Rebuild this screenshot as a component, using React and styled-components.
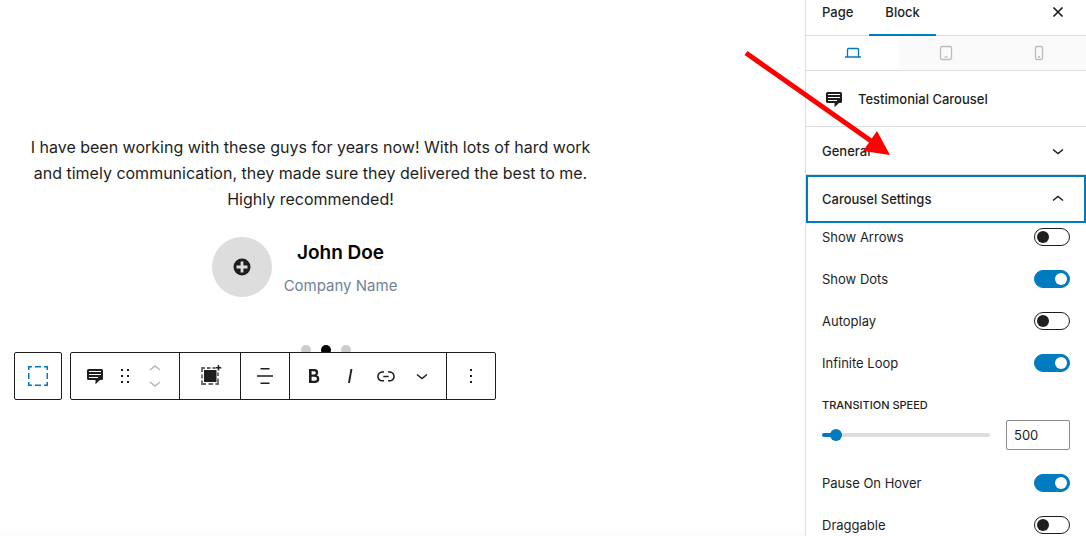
import React, { useState } from 'react';
import styled, { createGlobalStyle, css } from 'styled-components';

const ink = '#1e1e1e';
const blue = '#007bc0';
const line = '#dddddd';

const GlobalStyle = createGlobalStyle`
  *, *::before, *::after { box-sizing: border-box; }
  body {
    margin: 0;
    background: #fff;
    color: ${ink};
    font-family: Inter, "Liberation Sans", sans-serif;
    font-size: 13px;
  }
  button, input { font: inherit; color: inherit; }
  h2, h3, p, blockquote { margin: 0; }
`;

const Editor = styled.div`
  display: flex;
  align-items: stretch;
  height: 100vh;
  overflow: hidden;
`;

const Canvas = styled.main`
  flex: 1;
  min-width: 0;
  padding-top: 134px;
  background: linear-gradient(to top, #fbfbfb, #ffffff 8px);
`;

const Testimonial = styled.section`
  display: flex;
  flex-direction: column;
  align-items: center;
  max-width: 621px;
  padding: 0 24px;
`;

const Quote = styled.blockquote`
  font-size: 16px;
  line-height: 26px;
  text-align: center;
`;

const Author = styled.div`
  display: flex;
  margin-top: 25px;
`;

const Avatar = styled.button`
  display: grid;
  place-items: center;
  width: 60px;
  height: 60px;
  padding: 0;
  border: 0;
  border-radius: 50%;
  background: ${line};
`;

const AuthorText = styled.div`
  margin: 0 12px;
  text-align: center;
`;

const Name = styled.h3`
  color: #000;
  font-size: 19px;
  font-weight: 600;
  line-height: 32px;
`;

const Company = styled.p`
  margin-top: 4px;
  color: #71829a;
  font-size: 15px;
  line-height: 26px;
`;

const Dots = styled.div`
  display: flex;
  gap: 10px;
  margin-top: 46px;
  padding-left: 30px;
`;

const Dot = styled.button`
  width: 10px;
  height: 10px;
  padding: 0;
  border: 0;
  border-radius: 50%;
  background: ${(p) => (p.$active ? '#000' : '#ccc')};
`;

const ToolbarRow = styled.div`
  position: relative;
  display: flex;
  gap: 8px;
  margin: -3px 0 0 14px;
`;

const Toolbar = styled.div`
  display: flex;
  height: 48px;
  border: 1px solid ${ink};
  border-radius: 2px;
  background: #fff;
`;

const ToolGroup = styled.div`
  display: flex;
  align-items: center;
  padding: 0 ${(p) => p.$pad || 0}px;
  & + & { border-left: 1px solid ${ink}; }
`;

const Tool = styled.button`
  display: grid;
  place-items: center;
  width: ${(p) => p.$w || 36}px;
  height: 46px;
  padding: 0;
  border: 0;
  background: none;
`;

const Movers = styled.div`
  display: flex;
  flex-direction: column;
  color: #b5b5b5;
`;

const Mover = styled.button`
  display: grid;
  place-items: center;
  width: 36px;
  height: 16px;
  padding: 0;
  border: 0;
  background: none;
`;

const Sidebar = styled.aside`
  position: relative;
  flex: 0 0 281px;
  border-left: 1px solid ${line};
  background: #fff;
`;

const Tabs = styled.div`
  display: flex;
  align-items: flex-end;
  height: 36px;
  border-bottom: 1px solid ${line};
`;

const Tab = styled.button`
  height: 36px;
  margin-bottom: -1px;
  padding: 0 16px 10px;
  border: 0;
  border-bottom: 2px solid ${(p) => (p.$active ? blue : 'transparent')};
  background: none;
  font-weight: 500;
`;

const Close = styled.button`
  display: grid;
  place-items: center;
  width: 24px;
  height: 24px;
  margin: 0 16px 11px auto;
  padding: 0;
  border: 0;
  background: none;
`;

const Devices = styled.div`
  display: grid;
  grid-template-columns: repeat(3, 1fr);
  height: 35px;
  border-bottom: 1px solid ${line};
`;

const Device = styled.button`
  display: grid;
  place-items: center;
  padding: 0;
  border: 0;
  background: ${(p) => (p.$active ? '#fff' : '#fafafa')};
  color: ${(p) => (p.$active ? blue : '#bdbdbd')};
`;

const BlockCard = styled.div`
  display: flex;
  align-items: center;
  gap: 12px;
  height: 56px;
  padding: 0 16px;
  border-bottom: 1px solid ${line};
`;

const BlockTitle = styled.h2`
  font-size: 13px;
  font-weight: 500;
`;

const PanelToggle = styled.button`
  display: flex;
  align-items: center;
  justify-content: space-between;
  width: 100%;
  height: 48px;
  padding: 0 16px;
  border: 0;
  border-bottom: 1px solid ${line};
  background: none;
  font-weight: 500;
  ${(p) => p.$open && css`
    border-bottom: 0;
    box-shadow: inset 0 0 0 2px ${blue};
  `}
`;

const Settings = styled.div`
  display: flex;
  flex-direction: column;
  gap: 24px;
  padding: 5px 16px 0;
`;

const ToggleRow = styled.label`
  display: flex;
  align-items: center;
  justify-content: space-between;
  height: 18px;
`;

const Switch = styled.input`
  appearance: none;
  width: 36px;
  height: 18px;
  margin: 0;
  padding: 2px;
  border: 1px solid ${ink};
  border-radius: 9px;
  background: #fff;
  &::before {
    content: '';
    display: block;
    width: 12px;
    height: 12px;
    border-radius: 50%;
    background: ${ink};
  }
  &:checked {
    border-color: ${blue};
    background: ${blue};
  }
  &:checked::before {
    margin-left: auto;
    background: #fff;
  }
`;

const SpeedField = styled.div`
  display: flex;
  flex-direction: column;
  gap: 6px;
`;

const SpeedLabel = styled.label`
  font-size: 11px;
  font-weight: 500;
  line-height: 18px;
  text-transform: uppercase;
`;

const SpeedControls = styled.div`
  display: flex;
  align-items: center;
  gap: 16px;
`;

const Range = styled.input`
  appearance: none;
  flex: 1;
  min-width: 0;
  height: 12px;
  margin: 0;
  background: none;
  &::-webkit-slider-runnable-track {
    height: 4px;
    border-radius: 2px;
    background: linear-gradient(to right, ${blue} ${(p) => p.$fill}%, ${line} ${(p) => p.$fill}%);
  }
  &::-webkit-slider-thumb {
    appearance: none;
    width: 12px;
    height: 12px;
    margin-top: -4px;
    border-radius: 50%;
    background: ${blue};
  }
`;

const NumberBox = styled.input`
  width: 64px;
  height: 30px;
  padding: 0 7px;
  border: 1px solid #8c8c8c;
  border-radius: 2px;
  background: #fff;
`;

const Arrow = styled.svg`
  position: absolute;
  top: 48px;
  left: -64px;
  pointer-events: none;
`;

const Icon = ({ size = 24, children, ...rest }) => (
  <svg width={size} height={size} viewBox={`0 0 ${size} ${size}`} fill="none" stroke="currentColor" strokeWidth="1.5" aria-hidden="true" {...rest}>
    {children}
  </svg>
);

const BubbleIcon = () => (
  <Icon>
    <path fill="currentColor" stroke="none" d="M5.500 5h13a1.500 1.500 0 0 1 1.500 1.500v8a1.500 1.500 0 0 1-1.500 1.500H17l-4.500 4.300V16h-7A1.500 1.500 0 0 1 4 14.500v-8A1.500 1.500 0 0 1 5.500 5z" />
    <path stroke="#fff" strokeWidth="1" d="M6 7.500h12M6 10.500h12M6 13.500h9" />
  </Icon>
);

const ChevronIcon = ({ up }) => (
  <Icon><path d={up ? 'M7 13.500 12 9.500l5 4' : 'M7 10.500l5 4 5-4'} /></Icon>
);

const toggles = {
  arrows: ['Show Arrows', false],
  dots: ['Show Dots', true],
  autoplay: ['Autoplay', false],
  loop: ['Infinite Loop', true],
  pause: ['Pause On Hover', true],
  drag: ['Draggable', false],
};

const Toggle = ({ id }) => {
  const [label, initial] = toggles[id];
  return (
    <ToggleRow>
      {label}
      <Switch type="checkbox" defaultChecked={initial} />
    </ToggleRow>
  );
};

const MIN_SPEED = 100;
const MAX_SPEED = 7500;

export default function App() {
  const [speed, setSpeed] = useState(500);
  const update = (e) => setSpeed(e.target.value);
  const fill = 3 + Math.round(((speed - MIN_SPEED) / (MAX_SPEED - MIN_SPEED)) * 94);
  return (
    <Editor>
      <GlobalStyle />
      <Canvas>
        <Testimonial>
          <Quote>
            I have been working with these guys for years now! With lots of hard work and timely communication, they made sure they delivered the best to me. Highly recommended!
          </Quote>
          <Author>
            <Avatar aria-label="Add image">
              <Icon size={18} stroke="none">
                <circle cx="9" cy="9" r="8.500" fill="currentColor" />
                <path d="M9 3.500v11M3.500 9h11" stroke={line} strokeWidth="2.800" />
              </Icon>
            </Avatar>
            <AuthorText>
              <Name>John Doe</Name>
              <Company>Company Name</Company>
            </AuthorText>
          </Author>
          <Dots>
            <Dot aria-label="Slide 1" />
            <Dot aria-label="Slide 2" $active />
            <Dot aria-label="Slide 3" />
          </Dots>
        </Testimonial>
        <ToolbarRow>
          <Toolbar>
            <Tool $w={46} aria-label="Select parent block">
              <Icon stroke={blue}>
                <path d="M2.750 6V2.750H6M9 2.750h6M18 2.750h3.250V6M21.250 9v6M21.250 18v3.250H18M15 21.250H9M6 21.250H2.750V18M2.750 15V9" />
              </Icon>
            </Tool>
          </Toolbar>
          <Toolbar>
            <ToolGroup $pad={6}>
              <Tool aria-label="Testimonial Carousel"><BubbleIcon /></Tool>
              <Tool $w={24} aria-label="Drag">
                <Icon stroke="none" fill="currentColor">
                  <path d="M8 5h2v2H8zM14 5h2v2h-2zM8 11h2v2H8zM14 11h2v2h-2zM8 17h2v2H8zM14 17h2v2h-2z" />
                </Icon>
              </Tool>
              <Movers>
                <Mover aria-label="Move up"><Icon size={16}><path d="M3 10 8 6l5 4" /></Icon></Mover>
                <Mover aria-label="Move down"><Icon size={16}><path d="M3 6l5 4 5-4" /></Icon></Mover>
              </Movers>
            </ToolGroup>
            <ToolGroup $pad={12}>
              <Tool aria-label="Add slide">
                <Icon>
                  <path fill="currentColor" stroke="none" d="M6 6h12.500v12H6z" />
                  <path stroke="#666" strokeWidth="1.800" d="M4 8V4h3M9 4h3.500M14.500 4h3M20 8.500v3.500M20 14.500V20h-2.500M15 20h-4.500M8 20H4v-3.500M4 14.500v-4" />
                  <path d="M20.500 1v5.500M17.750 3.750h5.500" />
                </Icon>
              </Tool>
            </ToolGroup>
            <ToolGroup $pad={6}>
              <Tool aria-label="Align">
                <Icon><path d="M7.500 4.750h9M4 12h16M7.500 19.250h9" /></Icon>
              </Tool>
            </ToolGroup>
            <ToolGroup $pad={6}>
              <Tool aria-label="Bold">
                <Icon stroke="none" fill="currentColor">
                  <path d="M14.700 11.300c1-.6 1.500-1.600 1.500-3 0-2.300-1.300-3.400-4-3.400H7v14h5.800c1.400 0 2.500-.3 3.300-1 .8-.7 1.200-1.700 1.200-2.900.1-1.900-.8-3.100-2.600-3.700zm-5.100-4h2.300c.6 0 1.100.1 1.400.4.3.3.5.7.5 1.200s-.2 1-.5 1.200c-.3.3-.8.4-1.400.4H9.600V7.300zm4.600 9c-.4.3-1 .4-1.700.4H9.600v-3.900h2.900c.7 0 1.300.2 1.700.5.4.3.6.8.6 1.500s-.2 1.200-.6 1.500z" />
                </Icon>
              </Tool>
              <Tool aria-label="Italic">
                <Icon stroke="none" fill="currentColor"><path d="M12.500 5 10 19h1.900l2.500-14z" /></Icon>
              </Tool>
              <Tool aria-label="Link">
                <Icon stroke="none" fill="currentColor">
                  <path d="M15.600 7.200H14v1.500h1.600c2 0 3.700 1.700 3.700 3.700s-1.700 3.700-3.700 3.700H14v1.500h1.600c2.800 0 5.200-2.300 5.200-5.200 0-2.900-2.300-5.200-5.200-5.200zM4.700 12.400c0-2 1.700-3.700 3.700-3.700H10V7.200H8.400c-2.900 0-5.200 2.300-5.200 5.200 0 2.900 2.300 5.200 5.200 5.200H10v-1.500H8.400c-2 0-3.700-1.700-3.700-3.700zm4.600.9h5.300v-1.500H9.300v1.500z" />
                </Icon>
              </Tool>
              <Tool aria-label="More"><ChevronIcon /></Tool>
            </ToolGroup>
            <ToolGroup $pad={6}>
              <Tool aria-label="Options">
                <Icon stroke="none" fill="currentColor">
                  <path d="M11 5h2v2h-2zM11 11h2v2h-2zM11 17h2v2h-2z" />
                </Icon>
              </Tool>
            </ToolGroup>
          </Toolbar>
        </ToolbarRow>
      </Canvas>
      <Sidebar>
        <Tabs>
          <Tab>Page</Tab>
          <Tab $active>Block</Tab>
          <Close aria-label="Close settings">
            <Icon strokeWidth="1.700"><path d="M7.500 7.500l9 9M16.500 7.500l-9 9" /></Icon>
          </Close>
        </Tabs>
        <Devices>
          <Device $active aria-label="Desktop">
            <Icon size={18} strokeWidth="1.300"><path d="M3.500 13V5.500a1 1 0 0 1 1-1h9a1 1 0 0 1 1 1V13M1 13h16" /></Icon>
          </Device>
          <Device aria-label="Tablet">
            <Icon size={18} strokeWidth="1.300"><rect x="3.500" y="2.500" width="11" height="13" rx="1.500" /><path d="M7.500 13h3" /></Icon>
          </Device>
          <Device aria-label="Mobile">
            <Icon size={18} strokeWidth="1.300"><rect x="5.500" y="2.500" width="7" height="13" rx="1.500" /><path d="M8 13h2" /></Icon>
          </Device>
        </Devices>
        <BlockCard>
          <BubbleIcon />
          <BlockTitle>Testimonial Carousel</BlockTitle>
        </BlockCard>
        <PanelToggle aria-expanded="false">General<ChevronIcon /></PanelToggle>
        <PanelToggle aria-expanded="true" $open>Carousel Settings<ChevronIcon up /></PanelToggle>
        <Settings>
          <Toggle id="arrows" />
          <Toggle id="dots" />
          <Toggle id="autoplay" />
          <Toggle id="loop" />
          <SpeedField>
            <SpeedLabel htmlFor="speed">Transition Speed</SpeedLabel>
            <SpeedControls>
              <Range id="speed" type="range" min={MIN_SPEED} max={MAX_SPEED} step="100" value={speed} onChange={update} $fill={fill} />
              <NumberBox aria-label="Transition speed value" inputMode="numeric" value={speed} onChange={update} />
            </SpeedControls>
          </SpeedField>
          <Toggle id="pause" />
          <Toggle id="drag" />
        </Settings>
        <Arrow width="152" height="112" viewBox="0 0 152 112" aria-hidden="true">
          <path d="M4 5 132 95" stroke="#f00" strokeWidth="5" />
          <path d="M135 83 148 107 121 103z" fill="#f00" />
        </Arrow>
      </Sidebar>
    </Editor>
  );
}
